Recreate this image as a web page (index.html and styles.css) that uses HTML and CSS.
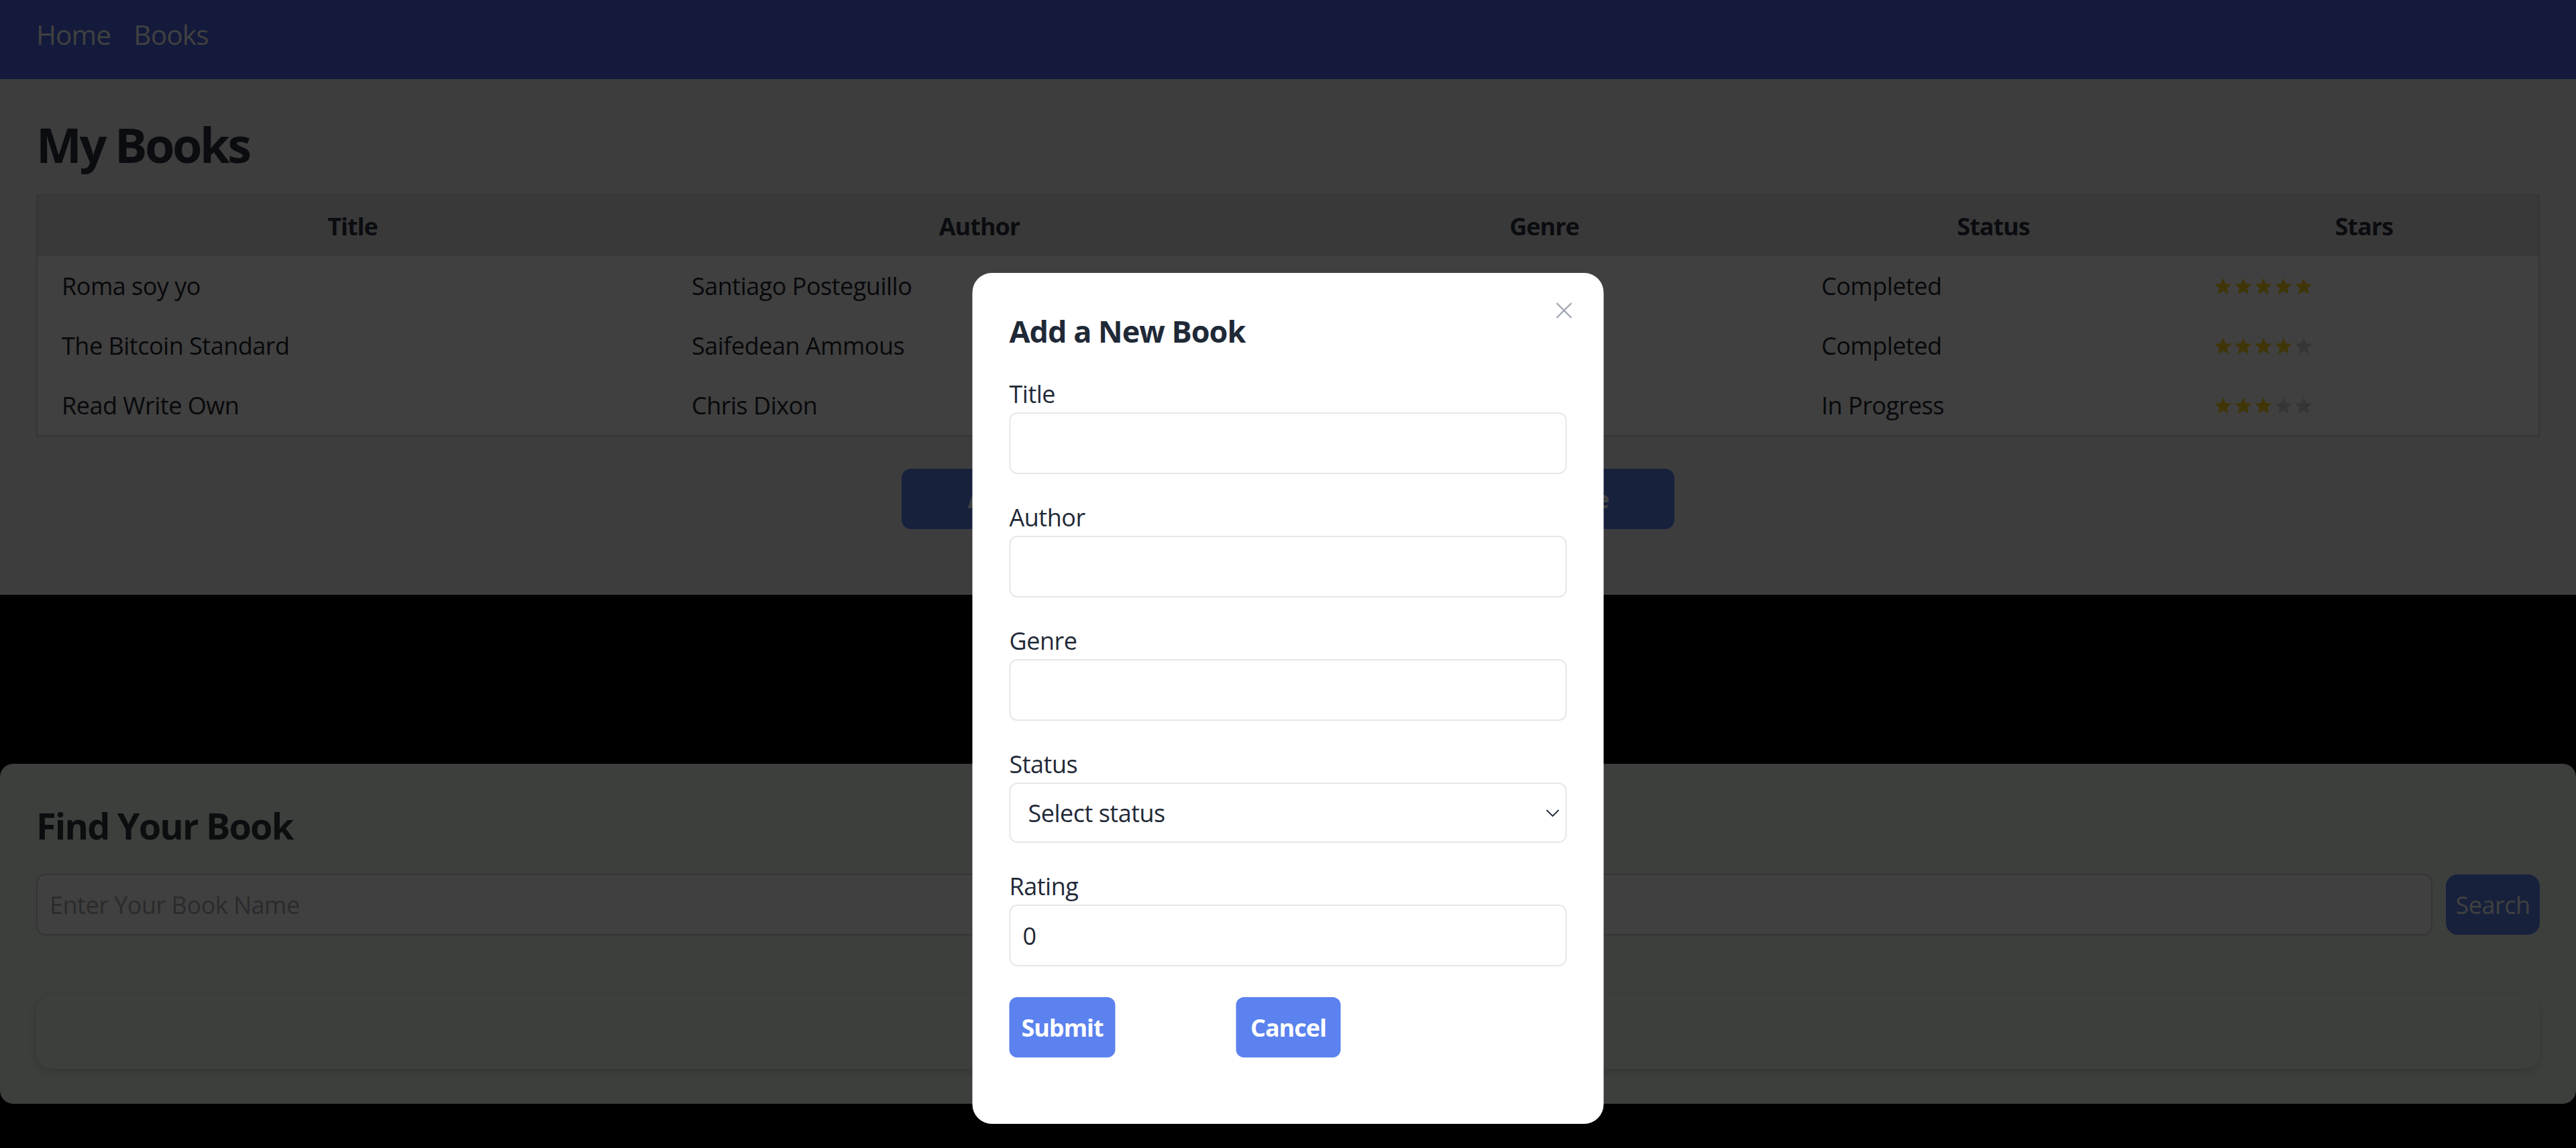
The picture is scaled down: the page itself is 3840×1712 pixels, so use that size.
FILE: index.html
```html
<!DOCTYPE html>
<html lang="en">
<head>
<meta charset="utf-8">
<title>My Books</title>
<link rel="stylesheet" href="styles.css">
</head>
<body>
<nav class="navbar">
  <a class="nav-link" href="#">Home</a>
  <a class="nav-link" href="#">Books</a>
</nav>

<main class="books">
  <h1 class="books-title">My Books</h1>
  <table class="books-table">
    <colgroup>
      <col class="col-title"><col class="col-author"><col class="col-genre"><col class="col-status"><col class="col-stars">
    </colgroup>
    <thead>
      <tr><th>Title</th><th>Author</th><th>Genre</th><th>Status</th><th>Stars</th></tr>
    </thead>
    <tbody>
      <tr>
        <td>Roma soy yo</td><td>Santiago Posteguillo</td><td>Historical Fiction</td><td>Completed</td>
        <td><span class="stars">
          <svg class="star on" viewBox="0 0 24 24"><path d="M12 1.5l3.1 7.1 7.7.7-5.8 5.1 1.7 7.6L12 18l-6.7 4 1.7-7.6-5.8-5.1 7.7-.7z"/></svg>
          <svg class="star on" viewBox="0 0 24 24"><path d="M12 1.5l3.1 7.1 7.7.7-5.8 5.1 1.7 7.6L12 18l-6.7 4 1.7-7.6-5.8-5.1 7.7-.7z"/></svg>
          <svg class="star on" viewBox="0 0 24 24"><path d="M12 1.5l3.1 7.1 7.7.7-5.8 5.1 1.7 7.6L12 18l-6.7 4 1.7-7.6-5.8-5.1 7.7-.7z"/></svg>
          <svg class="star on" viewBox="0 0 24 24"><path d="M12 1.5l3.1 7.1 7.7.7-5.8 5.1 1.7 7.6L12 18l-6.7 4 1.7-7.6-5.8-5.1 7.7-.7z"/></svg>
          <svg class="star on" viewBox="0 0 24 24"><path d="M12 1.5l3.1 7.1 7.7.7-5.8 5.1 1.7 7.6L12 18l-6.7 4 1.7-7.6-5.8-5.1 7.7-.7z"/></svg>
        </span></td>
      </tr>
      <tr>
        <td>The Bitcoin Standard</td><td>Saifedean Ammous</td><td>Economics</td><td>Completed</td>
        <td><span class="stars">
          <svg class="star on" viewBox="0 0 24 24"><path d="M12 1.5l3.1 7.1 7.7.7-5.8 5.1 1.7 7.6L12 18l-6.7 4 1.7-7.6-5.8-5.1 7.7-.7z"/></svg>
          <svg class="star on" viewBox="0 0 24 24"><path d="M12 1.5l3.1 7.1 7.7.7-5.8 5.1 1.7 7.6L12 18l-6.7 4 1.7-7.6-5.8-5.1 7.7-.7z"/></svg>
          <svg class="star on" viewBox="0 0 24 24"><path d="M12 1.5l3.1 7.1 7.7.7-5.8 5.1 1.7 7.6L12 18l-6.7 4 1.7-7.6-5.8-5.1 7.7-.7z"/></svg>
          <svg class="star on" viewBox="0 0 24 24"><path d="M12 1.5l3.1 7.1 7.7.7-5.8 5.1 1.7 7.6L12 18l-6.7 4 1.7-7.6-5.8-5.1 7.7-.7z"/></svg>
          <svg class="star off" viewBox="0 0 24 24"><path d="M12 1.5l3.1 7.1 7.7.7-5.8 5.1 1.7 7.6L12 18l-6.7 4 1.7-7.6-5.8-5.1 7.7-.7z"/></svg>
        </span></td>
      </tr>
      <tr>
        <td>Read Write Own</td><td>Chris Dixon</td><td>Technology</td><td>In Progress</td>
        <td><span class="stars">
          <svg class="star on" viewBox="0 0 24 24"><path d="M12 1.5l3.1 7.1 7.7.7-5.8 5.1 1.7 7.6L12 18l-6.7 4 1.7-7.6-5.8-5.1 7.7-.7z"/></svg>
          <svg class="star on" viewBox="0 0 24 24"><path d="M12 1.5l3.1 7.1 7.7.7-5.8 5.1 1.7 7.6L12 18l-6.7 4 1.7-7.6-5.8-5.1 7.7-.7z"/></svg>
          <svg class="star on" viewBox="0 0 24 24"><path d="M12 1.5l3.1 7.1 7.7.7-5.8 5.1 1.7 7.6L12 18l-6.7 4 1.7-7.6-5.8-5.1 7.7-.7z"/></svg>
          <svg class="star off" viewBox="0 0 24 24"><path d="M12 1.5l3.1 7.1 7.7.7-5.8 5.1 1.7 7.6L12 18l-6.7 4 1.7-7.6-5.8-5.1 7.7-.7z"/></svg>
          <svg class="star off" viewBox="0 0 24 24"><path d="M12 1.5l3.1 7.1 7.7.7-5.8 5.1 1.7 7.6L12 18l-6.7 4 1.7-7.6-5.8-5.1 7.7-.7z"/></svg>
        </span></td>
      </tr>
    </tbody>
  </table>
  <div class="actions">
    <button class="action-btn" type="button">Add Book</button>
    <button class="action-btn" type="button">Update Book</button>
    <button class="action-btn" type="button">Complete</button>
  </div>
</main>

<section class="finder">
  <h2 class="finder-title">Find Your Book</h2>
  <div class="search-row">
    <input class="search-input" type="text" placeholder="Enter Your Book Name">
    <button class="search-btn" type="button">Search</button>
  </div>
  <div class="results"></div>
</section>

<div class="overlay"></div>

<div class="modal">
  <button class="modal-close" type="button" aria-label="Close">
    <svg viewBox="0 0 26 26"><path d="M2 2L24 24M24 2L2 24"/></svg>
  </button>
  <h3 class="modal-title">Add a New Book</h3>
  <form class="modal-form">
    <div class="field">
      <label class="field-label">Title</label>
      <input class="field-input" type="text">
    </div>
    <div class="field">
      <label class="field-label">Author</label>
      <input class="field-input" type="text">
    </div>
    <div class="field">
      <label class="field-label">Genre</label>
      <input class="field-input" type="text">
    </div>
    <div class="field">
      <label class="field-label">Status</label>
      <div class="select-wrap">
        <select class="field-input field-select">
          <option>Select status</option>
          <option>In Progress</option>
          <option>Completed</option>
        </select>
        <svg class="select-chevron" viewBox="0 0 20 11"><path d="M1 1L10 10L19 1"/></svg>
      </div>
    </div>
    <div class="field">
      <label class="field-label">Rating</label>
      <input class="field-input field-number" type="number" value="0">
    </div>
    <div class="modal-actions">
      <button class="modal-btn" type="button">Submit</button>
      <button class="modal-btn modal-btn-cancel" type="button">Cancel</button>
    </div>
  </form>
</div>
</body>
</html>
```

FILE: styles.css
```css
html {
  background: #000;
}

body {
  margin: 0;
  background: #000;
  font-family: "Open Sans", "Noto Sans", sans-serif;
  color: #1f2937;
  letter-spacing: -0.5px;
}

/* ---------- navbar ---------- */
.navbar {
  height: 118px;
  box-sizing: border-box;
  padding: 20px 54px 0;
  background: rgb(76, 104, 236);
  display: flex;
  align-items: flex-start;
  gap: 34px;
}

.nav-link {
  color: #ffffff;
  text-decoration: none;
  font-size: 40.5px;
  line-height: 63px;
  letter-spacing: -0.8px;
}

/* ---------- books section ---------- */
.books {
  background: #f4f4f4;
  padding: 54px 54px 98px;
}

.books-title {
  margin: 0 0 32px;
  font-size: 72px;
  line-height: 86px;
  font-weight: 700;
  letter-spacing: -3.5px;
  color: #2d3142;
}

.books-table {
  width: 100%;
  table-layout: fixed;
  border-collapse: separate;
  border-spacing: 0;
  border: 2px solid #d4d4d4;
  font-size: 36px;
  color: #222630;
}

.col-title { width: 939px; }
.col-author { width: 930px; }
.col-genre { width: 754px; }
.col-status { width: 585px; }
.col-stars { width: 520px; }

.books-table th {
  background: #e4e4e4;
  height: 90px;
  padding: 0 36px;
  font-weight: 700;
  text-align: center;
  letter-spacing: -1px;
  color: #2d3142;
}

.books-table td {
  background: #fdfffd;
  height: 89px;
  padding: 0 36px;
  text-align: left;
  white-space: nowrap;
}

.stars {
  display: flex;
  align-items: center;
  gap: 2px;
}

.star {
  width: 28px;
  height: 28px;
}

.star.on { fill: #ffd21f; }
.star.off { fill: #d1d3d8; }

.actions {
  display: flex;
  justify-content: center;
  gap: 36px;
  margin-top: 48px;
}

.action-btn {
  width: 360px;
  height: 90px;
  border: 0;
  border-radius: 14px;
  background: #5b82ee;
  color: #ffffff;
  font-family: inherit;
  font-size: 36px;
  font-weight: 700;
  letter-spacing: -1px;
}

/* ---------- finder card ---------- */
.finder {
  margin-top: 252px;
  background: #f3fbf3;
  border-radius: 20px;
  padding: 56px 54px 52px;
}

.finder-title {
  margin: 0 0 36px;
  font-size: 54px;
  line-height: 72px;
  font-weight: 700;
  letter-spacing: -1.8px;
  color: #33373f;
}

.search-row {
  display: flex;
  align-items: center;
  gap: 20px;
}

.search-input {
  flex: 1;
  height: 92px;
  box-sizing: border-box;
  border: 2px solid #cfd0d4;
  border-radius: 14px;
  padding: 0 18px;
  background: #ffffff;
  font-family: inherit;
  font-size: 36px;
  letter-spacing: -0.5px;
  color: #1f2937;
}

.search-input::placeholder {
  color: #a9aab2;
}

.search-btn {
  width: 140px;
  height: 90px;
  border: 0;
  border-radius: 18px;
  background: #5b82ee;
  color: #ffffff;
  font-family: inherit;
  font-size: 36px;
  letter-spacing: -0.5px;
  padding: 0;
}

.results {
  margin-top: 89px;
  height: 110px;
  border-radius: 24px;
  background: #f3fbf3;
  box-shadow: 0 6px 14px rgba(0, 0, 0, 0.12), -6px 0 14px rgba(0, 0, 0, 0.04);
}

/* ---------- modal ---------- */
.overlay {
  position: fixed;
  inset: 0;
  background: rgba(0, 0, 0, 0.75);
  z-index: 10;
}

.modal {
  position: fixed;
  top: 407px;
  left: 50%;
  transform: translateX(-50%);
  width: 941px;
  box-sizing: border-box;
  padding: 55px 55px 99px;
  background: #ffffff;
  border-radius: 29px;
  z-index: 20;
}

.modal-close {
  position: absolute;
  top: 43px;
  right: 46px;
  width: 26px;
  height: 26px;
  padding: 0;
  border: 0;
  background: none;
}

.modal-close svg {
  display: block;
  width: 26px;
  height: 26px;
  stroke: #9ca3af;
  stroke-width: 2.2;
  fill: none;
}

.modal-title {
  margin: 0 0 36px;
  font-size: 45px;
  line-height: 63px;
  font-weight: 700;
  letter-spacing: -1px;
  color: #1f2937;
}

.field {
  margin-bottom: 38px;
}

.field-label {
  display: block;
  font-size: 36px;
  line-height: 54px;
  font-weight: 500;
  color: #1f2937;
}

.field-input {
  display: block;
  width: 100%;
  height: 92px;
  box-sizing: border-box;
  margin: 0;
  border: 2px solid #e5e7eb;
  border-radius: 12px;
  padding: 0 18px;
  background: #ffffff;
  font-family: inherit;
  font-size: 36px;
  letter-spacing: -0.5px;
  color: #1f2937;
  outline: none;
}

.field-number {
  -moz-appearance: textfield;
}

.field-number::-webkit-inner-spin-button,
.field-number::-webkit-outer-spin-button {
  -webkit-appearance: none;
  margin: 0;
}

.select-wrap {
  position: relative;
}

.field-select {
  -webkit-appearance: none;
  appearance: none;
  height: 90px;
  padding-left: 26px;
}

.select-chevron {
  position: absolute;
  right: 11px;
  top: 40px;
  width: 20px;
  height: 11px;
  fill: none;
  stroke: #1f2937;
  stroke-width: 1.8;
  pointer-events: none;
}

.modal-actions {
  display: flex;
  margin-top: 46px;
}

.modal-btn {
  width: 158px;
  height: 90px;
  border: 0;
  border-radius: 12px;
  background: #5b82ee;
  color: #ffffff;
  font-family: inherit;
  font-size: 36px;
  font-weight: 700;
  letter-spacing: -1px;
  padding: 0;
}

.modal-btn-cancel {
  width: 156px;
  margin-left: 180px;
}
```
